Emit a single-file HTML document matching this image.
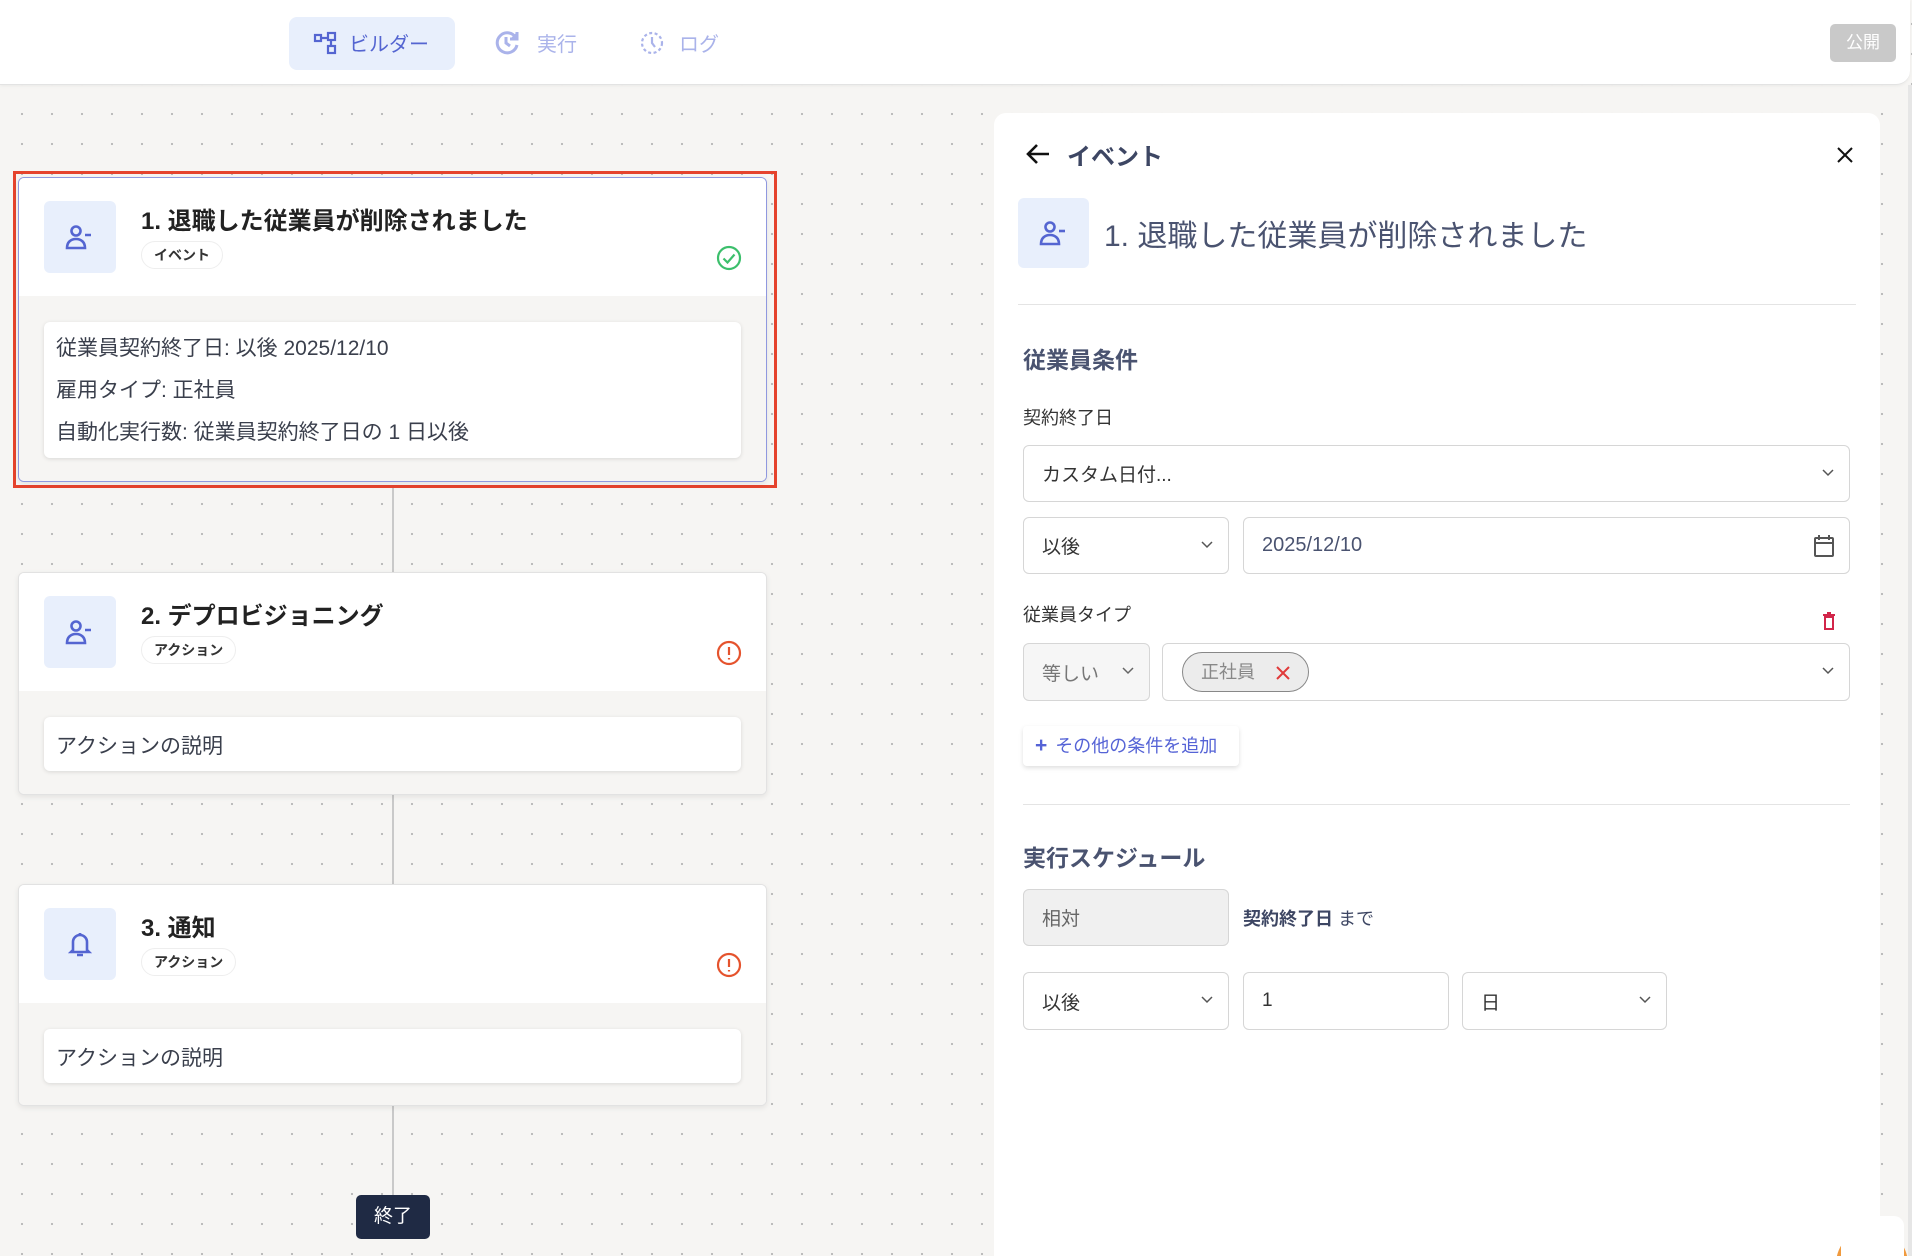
<!DOCTYPE html>
<html style="overflow:hidden;width:1912px;height:1256px"><head><meta charset="utf-8"><style>
*{box-sizing:border-box;margin:0;padding:0}
html,body{width:1912px;height:1256px;overflow:hidden}
body{font-family:"Liberation Sans","Noto Sans CJK JP",sans-serif;color:#333}
#root{position:relative;width:1912px;height:1256px;overflow:hidden;background:#f6f5f3;
background-image:radial-gradient(circle,#b9b9b9 1px,transparent 1.3px);background-size:30px 30px;background-position:7px 9px}
.abs{position:absolute}
.top{left:0;top:0;width:1910px;height:85px;background:#fff;border-bottom:1px solid #e3e3e3;border-radius:0 0 14px 0;box-shadow:0 1px 3px rgba(0,0,0,.05)}
.nav{display:flex;align-items:center;gap:10px;font-size:20px}
.card{background:#fff;border:1px solid #e2e2e2;border-radius:6px;box-shadow:0 2px 6px rgba(0,0,0,.08);overflow:hidden}
.hdr{height:118px;position:relative;background:#fff}
.bodyg{background:#f6f5f3;position:absolute;left:0;right:0;bottom:0}
.ib{position:absolute;left:25px;top:23px;width:72px;height:72px;background:#e8effc;border-radius:6px;display:flex;align-items:center;justify-content:center}
.tt{position:absolute;left:122px;top:23px;font-size:24px;font-weight:bold;color:#222}
.badge{position:absolute;left:122px;top:63px;height:28px;padding:0 12px;border:1px solid #eee;border-radius:14px;font-size:14px;font-weight:bold;line-height:26px;color:#333;background:#fff}
.inner{position:absolute;left:25px;right:25px;background:#fff;border-radius:6px;box-shadow:0 1px 4px rgba(0,0,0,.12);font-size:21px;color:#3a3f4c;padding-left:12px}
.line{position:absolute;left:392px;width:2px;background:#c9c9c9}
.panel{left:994px;top:113px;width:886px;height:1143px;background:#fff;border-radius:12px 12px 0 0}
.fld{position:absolute;border:1px solid #d6d6d6;border-radius:6px;background:#fff;font-size:19px;color:#333;display:flex;align-items:center;padding-left:18px}
.chev{position:absolute;right:14px;top:50%;margin-top:-6px}
.lbl{position:absolute;font-size:18px;color:#333}
.h2{position:absolute;font-size:23px;font-weight:bold;color:#4a5370}
</style></head><body><div id="root">
<div class="abs top"></div>
<div class="abs" style="left:289px;top:17px;width:166px;height:53px;background:#e8effc;border-radius:8px"></div>
<div class="abs nav" style="left:313px;top:28px;color:#5465d1">
<svg width="26" height="26" viewBox="0 0 26 26" fill="none" stroke="#5465d1" stroke-width="2.2"><rect x="2" y="5" width="6" height="6"/><rect x="15" y="3" width="7" height="7"/><rect x="15" y="16" width="7" height="7"/><path d="M8 8h7M18 10v6"/></svg><span>ビルダー</span></div>
<div class="abs nav" style="left:493px;top:28px;color:#aab3ea">
<svg width="28" height="28" viewBox="0 0 28 28" fill="none" stroke="#aab3ea" stroke-width="3"><path d="M23 9A10 10 0 1 0 24 16"/><path d="M13 8v6l4 3"/><path d="M24 3v7h-7" fill="#aab3ea"/></svg><span style="margin-left:6px">実行</span></div>
<div class="abs nav" style="left:639px;top:28px;color:#aab3ea">
<svg width="26" height="26" viewBox="0 0 26 26" fill="none" stroke="#aab3ea" stroke-width="2.2" stroke-dasharray="3 2.5"><circle cx="13" cy="13" r="10"/><path d="M13 7v6l3 4" stroke-dasharray="none"/></svg><span style="margin-left:4px">ログ</span></div>
<div class="abs" style="left:1830px;top:24px;width:66px;height:38px;background:#c9c9c9;border-radius:5px;color:#fff;font-size:17px;text-align:center;line-height:38px">公開</div>
<div class="abs" style="left:1908px;top:85px;width:4px;height:1171px;background:#e6e6e6"></div>

<div class="abs line" style="top:488px;height:84px"></div>
<div class="abs line" style="top:795px;height:89px"></div>
<div class="abs line" style="top:1106px;height:89px"></div>

<div class="abs" style="left:13px;top:171px;width:764px;height:317px;border:3px solid #e5432d"></div>
<div class="abs card" style="left:18px;top:177px;width:749px;height:305px;border-color:#8f98df">
<div class="hdr"><div class="ib"><svg width="34" height="34" viewBox="0 0 34 34" fill="none" stroke="#5465d1" stroke-width="2.6"><circle cx="13" cy="11" r="4.5"/><path d="M4 28c0-6 4-9 9-9s9 3 9 9z"/><path d="M22 15h6"/></svg></div>
<div class="tt">1. 退職した従業員が削除されました</div><div class="badge">イベント</div>
<svg class="abs" style="left:697px;top:67px" width="26" height="26" viewBox="0 0 26 26" fill="none" stroke="#3cbf6c" stroke-width="2.2"><circle cx="13" cy="13" r="11"/><path d="M7.5 13.5l4 4 7-8"/></svg></div>
<div class="bodyg" style="top:118px"><div class="inner" style="top:26px;height:136px">
<div class="abs" style="top:10px;left:12px">従業員契約終了日: 以後 2025/12/10</div>
<div class="abs" style="top:52px;left:12px">雇用タイプ: 正社員</div>
<div class="abs" style="top:94px;left:12px">自動化実行数: 従業員契約終了日の 1 日以後</div></div></div>
</div>

<div class="abs card" style="left:18px;top:572px;width:749px;height:223px">
<div class="hdr"><div class="ib"><svg width="34" height="34" viewBox="0 0 34 34" fill="none" stroke="#5465d1" stroke-width="2.6"><circle cx="13" cy="11" r="4.5"/><path d="M4 28c0-6 4-9 9-9s9 3 9 9z"/><path d="M22 15h6"/></svg></div>
<div class="tt">2. デプロビジョニング</div><div class="badge">アクション</div>
<svg class="abs" style="left:697px;top:67px" width="26" height="26" viewBox="0 0 26 26" fill="none" stroke="#e5532d" stroke-width="2.2"><circle cx="13" cy="13" r="11"/><path d="M13 7v8M13 18v1.5"/></svg></div>
<div class="bodyg" style="top:118px"><div class="inner" style="top:26px;height:54px"><div class="abs" style="top:13px;left:12px">アクションの説明</div></div></div>
</div>

<div class="abs card" style="left:18px;top:884px;width:749px;height:222px">
<div class="hdr"><div class="ib"><svg width="32" height="32" viewBox="0 0 32 32" fill="none" stroke="#5465d1" stroke-width="2.6"><path d="M9 22V14a7 7 0 0 1 14 0v8l2 2H7z"/><path d="M13 27h6M16 5v2"/></svg></div>
<div class="tt">3. 通知</div><div class="badge">アクション</div>
<svg class="abs" style="left:697px;top:67px" width="26" height="26" viewBox="0 0 26 26" fill="none" stroke="#e5532d" stroke-width="2.2"><circle cx="13" cy="13" r="11"/><path d="M13 7v8M13 18v1.5"/></svg></div>
<div class="bodyg" style="top:118px"><div class="inner" style="top:26px;height:54px"><div class="abs" style="top:13px;left:12px">アクションの説明</div></div></div>
</div>

<div class="abs" style="left:356px;top:1195px;width:74px;height:44px;background:#1f2a44;border-radius:5px;color:#fff;font-size:19px;text-align:center;line-height:44px">終了</div>

<div class="abs panel">
<svg class="abs" style="left:30px;top:27px" width="28" height="28" viewBox="0 0 28 28" fill="none" stroke="#111" stroke-width="2.6"><path d="M25 14H4M13 5l-9 9 9 9"/></svg>
<div class="abs" style="left:73px;top:24px;font-size:24px;font-weight:bold;color:#3d4663">イベント</div>
<svg class="abs" style="left:842px;top:33px" width="18" height="18" viewBox="0 0 18 18" stroke="#111" stroke-width="2"><path d="M2 2l14 14M16 2L2 16"/></svg>
<div class="abs" style="left:24px;top:85px;width:71px;height:70px;background:#e8effc;border-radius:6px;display:flex;align-items:center;justify-content:center"><svg width="34" height="34" viewBox="0 0 34 34" fill="none" stroke="#5465d1" stroke-width="2.6"><circle cx="13" cy="11" r="4.5"/><path d="M4 28c0-6 4-9 9-9s9 3 9 9z"/><path d="M22 15h6"/></svg></div>
<div class="abs" style="left:110px;top:98px;font-size:30px;color:#4a5370">1. 退職した従業員が削除されました</div>
<div class="abs" style="left:24px;top:191px;width:838px;height:1px;background:#e4e4e4"></div>
<div class="h2" style="left:29px;top:228px">従業員条件</div>
<div class="lbl" style="left:29px;top:291px">契約終了日</div>
<div class="fld" style="left:29px;top:332px;width:827px;height:57px">カスタム日付...<svg class="chev" width="14" height="10" viewBox="0 0 14 10" fill="none" stroke="#555" stroke-width="1.5"><path d="M2 2l5 5 5-5"/></svg></div>
<div class="fld" style="left:29px;top:404px;width:206px;height:57px">以後<svg class="chev" width="14" height="10" viewBox="0 0 14 10" fill="none" stroke="#555" stroke-width="1.5"><path d="M2 2l5 5 5-5"/></svg></div>
<div class="fld" style="left:249px;top:404px;width:607px;height:57px;color:#4a5370;font-size:20px">2025/12/10<svg class="abs" style="right:14px;top:16px" width="22" height="24" viewBox="0 0 22 24" fill="none" stroke="#555" stroke-width="2"><rect x="2" y="4" width="18" height="18" rx="1"/><path d="M2 9h18M6 1v5M16 1v5"/></svg></div>
<div class="lbl" style="left:29px;top:488px">従業員タイプ</div>
<svg class="abs" style="left:828px;top:499px" width="14" height="18" viewBox="0 0 14 18" fill="none" stroke="#d2264a" stroke-width="2"><path d="M1 3h12M5 1h4M3 5h8v12H3z"/></svg>
<div class="fld" style="left:29px;top:530px;width:127px;height:58px;background:#f6f6f6;color:#777">等しい<svg class="chev" width="14" height="10" viewBox="0 0 14 10" fill="none" stroke="#666" stroke-width="1.5"><path d="M2 2l5 5 5-5"/></svg></div>
<div class="fld" style="left:168px;top:530px;width:688px;height:58px"><div class="abs" style="left:19px;top:8px;width:127px;height:40px;border:1px solid #888;border-radius:20px;background:#ececec;color:#888;font-size:18px;line-height:38px;padding-left:18px">正社員<svg class="abs" style="left:92px;top:12px" width="16" height="16" viewBox="0 0 16 16" stroke="#e03a3a" stroke-width="2"><path d="M2 2l12 12M14 2L2 14"/></svg></div><svg class="chev" width="14" height="10" viewBox="0 0 14 10" fill="none" stroke="#555" stroke-width="1.5"><path d="M2 2l5 5 5-5"/></svg></div>
<div class="abs" style="left:29px;top:613px;width:216px;height:40px;background:#fff;border-radius:4px;box-shadow:0 2px 5px rgba(0,0,0,.13);color:#5563d6;font-size:18px;line-height:40px;padding-left:12px"><span style="font-size:21px;font-weight:bold;margin-right:8px">+</span>その他の条件を追加</div>
<div class="abs" style="left:29px;top:691px;width:827px;height:1px;background:#e4e4e4"></div>
<div class="h2" style="left:29px;top:726px">実行スケジュール</div>
<div class="fld" style="left:29px;top:776px;width:206px;height:57px;background:#f0f0f0;color:#666">相対</div>
<div class="abs" style="left:249px;top:792px;font-size:18px;color:#3d4663"><b>契約終了日</b> まで</div>
<div class="fld" style="left:29px;top:859px;width:206px;height:58px">以後<svg class="chev" width="14" height="10" viewBox="0 0 14 10" fill="none" stroke="#555" stroke-width="1.5"><path d="M2 2l5 5 5-5"/></svg></div>
<div class="fld" style="left:249px;top:859px;width:206px;height:58px">1</div>
<div class="fld" style="left:468px;top:859px;width:205px;height:58px">日<svg class="chev" width="14" height="10" viewBox="0 0 14 10" fill="none" stroke="#555" stroke-width="1.5"><path d="M2 2l5 5 5-5"/></svg></div>
</div>
<div class="abs" style="left:1836px;top:1228px;width:72px;height:72px;border-radius:50%;background:#f09a3e"></div>
<div class="abs" style="left:1841px;top:1216px;width:63px;height:60px;border-radius:10px;background:#fff"></div>
</div></body></html>
